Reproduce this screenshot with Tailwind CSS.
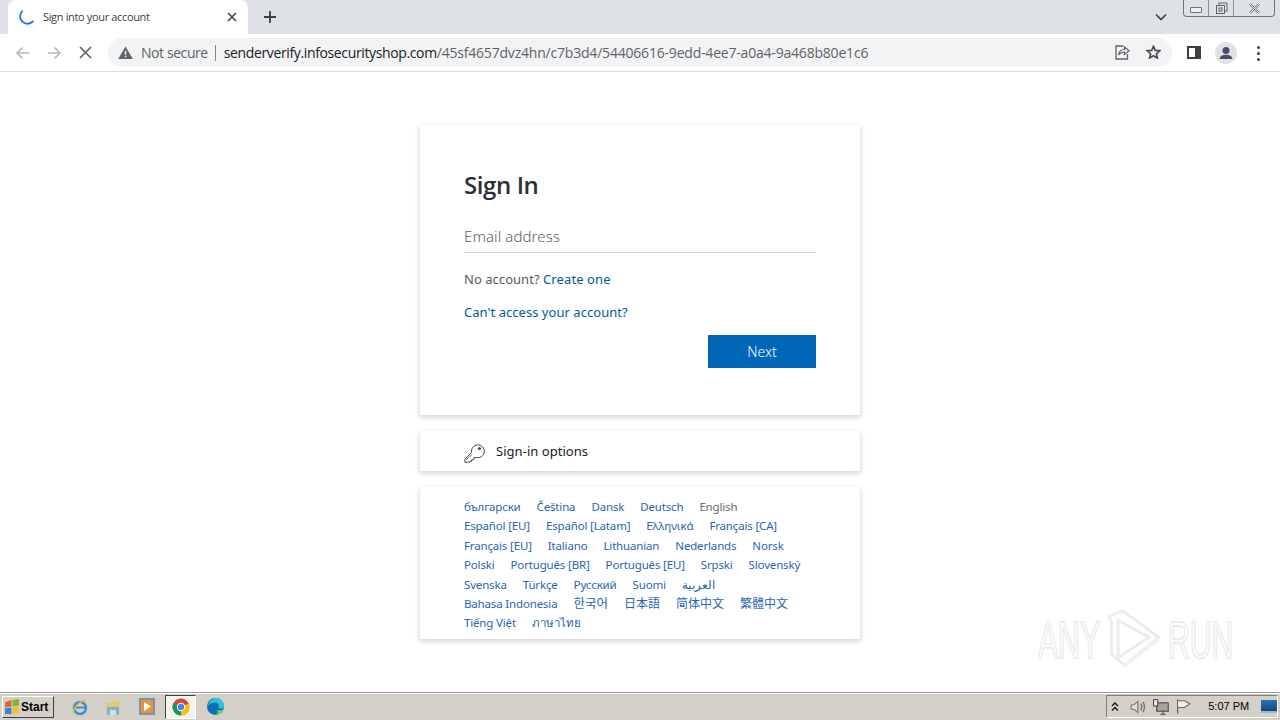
<!DOCTYPE html>
<html lang="en">
<head>
<meta charset="utf-8">
<title>Sign into your account</title>
<script src="https://cdn.jsdelivr.net/npm/@tailwindcss/browser@4"></script>
</head>
<body class="w-[1280px] h-[720px] overflow-hidden bg-white font-['Noto_Sans','Noto_Sans_CJK_KR',sans-serif] relative flex flex-col">

<!-- tab strip -->
<div class="h-[34px] bg-[#dee1e6] flex items-end relative shrink-0">
  <div class="ml-[8px] w-[240px] h-[34px] bg-white rounded-t-[8px] flex items-center pl-[11px] pr-[11px] relative">
    <svg width="16" height="16" viewBox="0 0 16 16" fill="none" class="shrink-0"><path d="M3.200 2.200 A7 7 0 0 0 13.800 12.500" stroke="#1a73e8" stroke-width="1.800" stroke-linecap="round"/></svg>
    <span class="ml-[8px] text-[11px] text-[#3c4043] whitespace-nowrap font-['Open_Sans',sans-serif] tracking-[-0.35px]">Sign into your account</span>
    <svg class="ml-auto" width="10" height="10" viewBox="0 0 10 10"><path d="M1 1L9 9M9 1L1 9" stroke="#45484c" stroke-width="1.700"/></svg>
  </div>
  <div class="ml-[16px] h-[34px] flex items-center">
    <svg width="12" height="12" viewBox="0 0 12 12"><path d="M6 0V12M0 6H12" stroke="#3c4043" stroke-width="1.800"/></svg>
  </div>
  <svg class="absolute left-[1155px] top-[13px]" width="12" height="8" viewBox="0 0 12 8" fill="none"><path d="M1 1.500L6 6.500L11 1.500" stroke="#3c4043" stroke-width="1.700"/></svg>
  <!-- window buttons -->
  <div class="absolute left-[1183px] top-0 w-[92px] h-[17px] border border-t-0 border-[#70757c] rounded-b-[4px] flex">
    <div class="w-[25px] h-full border-r border-[#8b9097] flex items-center justify-center">
      <div class="w-[12px] h-[6px] border border-[#6f747a] rounded-[1px] bg-[#eef0f3] mt-[3px]"></div>
    </div>
    <div class="w-[25px] h-full border-r border-[#8b9097] flex items-center justify-center">
      <svg width="13" height="13" viewBox="0 0 13 13" fill="none"><rect x="4" y="1" width="8" height="8" stroke="#5f6368"/><rect x="1.500" y="3.500" width="8" height="8" fill="#dee1e6" stroke="#5f6368"/><rect x="4" y="6" width="3" height="3" stroke="#5f6368"/></svg>
    </div>
    <div class="flex-1 flex items-center justify-center">
      <svg width="13" height="11" viewBox="0 0 13 11"><path d="M2 1L11 10M11 1L2 10" stroke="#70757c" stroke-width="2.400"/><path d="M2 1L11 10M11 1L2 10" stroke="#f1f2f4" stroke-width="1"/></svg>
    </div>
  </div>
</div>

<!-- toolbar -->
<div class="h-[38px] bg-white border-b border-[#dadce0] flex items-center shrink-0 relative">
  <svg class="ml-[15px]" width="15" height="14" viewBox="0 0 15 14" fill="none"><path d="M14 7H2M7.500 1.500L2 7L7.500 12.500" stroke="#b6b8bb" stroke-width="1.700"/></svg>
  <svg class="ml-[17px]" width="15" height="14" viewBox="0 0 15 14" fill="none"><path d="M1 7H13M7.500 1.500L13 7L7.500 12.500" stroke="#b6b8bb" stroke-width="1.700"/></svg>
  <svg class="ml-[17px]" width="13" height="13" viewBox="0 0 13 13"><path d="M1 1L12 12M12 1L1 12" stroke="#5f6368" stroke-width="1.700"/></svg>
  <div class="ml-[16px] w-[1064px] h-[29px] bg-[#f1f3f4] rounded-full flex items-center relative">
    <svg class="ml-[10px]" width="15" height="13" viewBox="0 0 15 13"><path d="M7.500 0.500L14.800 13H0.200Z" fill="#5f6368"/><rect x="6.800" y="4.800" width="1.500" height="4" fill="#f1f3f4"/><rect x="6.800" y="9.800" width="1.500" height="1.500" fill="#f1f3f4"/></svg>
    <span class="ml-[8px] text-[14px] text-[#5f6368] whitespace-nowrap font-['Open_Sans',sans-serif] tracking-[-0.42px]">Not secure</span>
    <div class="ml-[7px] w-px h-[16px] bg-[#80868b]"></div>
    <span class="ml-[8px] text-[14px] whitespace-nowrap text-[#5f6368] font-['Open_Sans',sans-serif] tracking-[-0.2px]"><span class="text-[#202124] tracking-[-0.37px]">senderverify.infosecurityshop.com</span>/45sf4657dvz4hn/c7b3d4/54406616-9edd-4ee7-a0a4-9a468b80e1c6</span>
    <svg class="absolute left-[1006px] top-[7px]" width="16" height="15" viewBox="0 0 16 15" fill="none"><path d="M9 1H1.500V14H13V9" stroke="#5f6368" stroke-width="1.300" transform="translate(0.500 0)"/><path d="M4.500 10C5 6.500 7.500 4.500 10.500 4.500V2L15 5.800L10.500 9.500V7C8 7 6 8 4.500 10Z" fill="#f1f3f4" stroke="#5f6368" stroke-width="1.200"/></svg>
    <svg class="absolute left-[1038px] top-[7px]" width="15" height="14" viewBox="0 0 15 14" fill="none"><path d="M7.500 1.300L9.300 5.400L13.800 5.800L10.400 8.700L11.400 13L7.500 10.700L3.600 13L4.600 8.700L1.200 5.800L5.700 5.400Z" stroke="#45484c" stroke-width="1.600"/></svg>
  </div>
  <div class="absolute left-[1187px] top-[12px] w-[14px] h-[13px] border-[2px] border-[#3c4043] border-r-[6px] bg-white"></div>
  <div class="absolute left-[1215px] top-[8px] w-[22px] h-[22px] rounded-full bg-[#e0e2e8] overflow-hidden">
    <svg width="22" height="22" viewBox="0 0 22 22"><circle cx="11" cy="8.500" r="3.500" fill="#474e66"/><path d="M4.500 17C5.500 13.500 8 12.800 11 12.800S16.500 13.500 17.500 17Z" fill="#474e66"/></svg>
  </div>
  <div class="absolute left-[1257px] top-[12px] flex flex-col gap-[3px]">
    <div class="w-[3px] h-[3px] rounded-full bg-[#3c4043]"></div>
    <div class="w-[3px] h-[3px] rounded-full bg-[#3c4043]"></div>
    <div class="w-[3px] h-[3px] rounded-full bg-[#3c4043]"></div>
  </div>
</div>

<!-- page -->
<main class="flex-1 flex flex-col items-center pt-[53px] bg-white">
  <section class="w-[440px] h-[290px] bg-white shadow-[0_2px_6px_rgba(0,0,0,0.2)] px-[44px] pt-[44px] flex flex-col">
    <h1 class="text-[24px] leading-[32px] font-semibold text-[#2b2f36] font-['Open_Sans',sans-serif] tracking-[-0.4px]">Sign In</h1>
    <div class="mt-[20px] h-[32px] border-b border-[#d5d5d8] text-[15px] leading-[30px] font-light text-[#5e5e5e] tracking-[0.1px]">Email address</div>
    <p class="mt-[16px] text-[13px] leading-[21px] text-[#5a5a5a] tracking-[0.04px]">No account? <a class="text-[#005a9e] tracking-[0.1px]">Create one</a></p>
    <p class="mt-[12px] text-[13px] leading-[21px] text-[#005a9e] tracking-[0.04px]"><a>Can't access your account?</a></p>
    <div class="mt-[12px] flex justify-end">
      <div class="w-[108px] h-[33px] bg-[#0067b8] text-white text-[14px] font-light flex items-center justify-center">Next</div>
    </div>
  </section>

  <section class="mt-[16px] w-[440px] h-[40px] bg-white shadow-[0_2px_6px_rgba(0,0,0,0.2)] pl-[44px] flex items-center">
    <svg width="21" height="20" viewBox="0 0 21 20" fill="none" class="mt-[3px]"><path d="M7.500 9.500A6.500 6.500 0 1 1 12 14.500L9.800 14.700L9.700 16.700L7.700 16.800L7.500 18.500L5 19L1 19.500L0.700 16.500Z" stroke="#4a4a4a" stroke-width="1"/><circle cx="15.500" cy="5.500" r="1.600" fill="#4a4a4a"/><path d="M2 17L8 11.500" stroke="#4a4a4a" stroke-width="0.800"/></svg>
    <span class="ml-[11px] mt-[2px] text-[13px] text-[#1b1b1b] tracking-[0.04px]">Sign-in options</span>
  </section>

  <section class="mt-[16px] w-[440px] h-[152px] bg-white shadow-[0_2px_6px_rgba(0,0,0,0.2)] pl-[44px] pt-[10px] text-[11.500px] leading-[19.400px] text-[#2a64b4] tracking-[-0.16px]">
    <div class="flex gap-[16px]"><a>български</a><a>Čeština</a><a>Dansk</a><a>Deutsch</a><a class="text-[#6a6a6a]">English</a></div>
    <div class="flex gap-[16px]"><a>Español [EU]</a><a>Español [Latam]</a><a>Ελληνικά</a><a>Français [CA]</a></div>
    <div class="flex gap-[16px]"><a>Français [EU]</a><a>Italiano</a><a>Lithuanian</a><a>Nederlands</a><a>Norsk</a></div>
    <div class="flex gap-[16px]"><a>Polski</a><a>Português [BR]</a><a>Português [EU]</a><a>Srpski</a><a>Slovenský</a></div>
    <div class="flex gap-[16px]"><a>Svenska</a><a>Türkçe</a><a>Русский</a><a>Suomi</a><a class="text-[11.500px] font-medium tracking-normal">العربية</a></div>
    <div class="flex gap-[16px]"><a>Bahasa Indonesia</a><a class="text-[12.500px] tracking-normal">한국어</a><a class="text-[12px] tracking-normal">日本語</a><a class="text-[12px] tracking-normal">简体中文</a><a class="text-[12px] tracking-normal">繁體中文</a></div>
    <div class="flex gap-[16px]"><a>Tiếng Việt</a><a class="tracking-normal">ภาษาไทย</a></div>
  </section>
</main>

<!-- watermark -->
<div class="absolute left-[1038px] top-[606px] w-[200px] h-[68px] flex items-center pointer-events-none select-none">
  <span class="text-[52px] leading-none text-transparent [-webkit-text-stroke:2px_#ececec] font-['Liberation_Sans',sans-serif] scale-x-[0.58] origin-left w-[62px] shrink-0 whitespace-nowrap">ANY</span>
  <svg class="ml-[4px] shrink-0" width="62" height="64" viewBox="0 0 66 66" fill="none"><path d="M5 8L20 2L58 30L22 60L8 48V14Z" stroke="#ececec" stroke-width="3"/><path d="M15 12V52L48 30Z" stroke="#ececec" stroke-width="3"/><path d="M22 60L58 32" stroke="#f2f2f2" stroke-width="4"/></svg>
  <span class="ml-[2px] text-[52px] leading-none text-transparent [-webkit-text-stroke:2px_#ececec] font-['Liberation_Sans',sans-serif] scale-x-[0.58] origin-left shrink-0 whitespace-nowrap">RUN</span>
</div>

<!-- taskbar -->
<footer class="h-[28px] bg-[#d4d0c8] border-t border-t-[#9b9a96] shadow-[inset_0_1px_0_#ffffff] flex items-center shrink-0 relative">
  <div class="ml-[2px] w-[52px] h-[22px] bg-[#d4d0c8] border border-t-white border-l-white border-r-[#404040] border-b-[#404040] flex items-center pl-[1px]">
    <svg width="17" height="16" viewBox="0 0 16 15"><path d="M1 3L7 1V7L1 8Z" fill="#e8622a"/><path d="M8 1L14 0V6L8 7Z" fill="#7db53a"/><path d="M1 9L7 8V14L1 14Z" fill="#3d7fd0"/><path d="M8 8L14 7V13L8 14Z" fill="#f0c030"/></svg>
    <span class="text-[12px] font-bold text-black font-['Liberation_Sans',sans-serif]">Start</span>
  </div>
  <!-- IE -->
  <svg class="ml-[17px]" width="18" height="18" viewBox="0 0 18 18" fill="none"><circle cx="9" cy="10" r="6" stroke="#3f8fd0" stroke-width="2.500"/><path d="M4 9.500H14" stroke="#3f8fd0" stroke-width="2"/><path d="M3 15C1 12 8 3 15 2" stroke="#e8b93c" stroke-width="1.500"/></svg>
  <!-- explorer -->
  <svg class="ml-[16px]" width="16" height="18" viewBox="0 0 16 18"><path d="M1 5H6L7 3H14V16H1Z" fill="#e8c66a"/><path d="M2 9H14V17H2Z" fill="#7fb1c9"/><rect x="5" y="12" width="6" height="5" fill="#cfe3ec"/></svg>
  <!-- media -->
  <div class="ml-[18px] w-[16px] h-[17px] bg-[#6f96b8] flex items-center justify-center">
    <div class="w-[12px] h-[13px] bg-[#ec9232] flex items-center justify-center">
      <svg width="7" height="9" viewBox="0 0 7 9"><path d="M0 0L7 4.500L0 9Z" fill="#ffffff"/></svg>
    </div>
  </div>
  <!-- chrome, active -->
  <div class="ml-[10px] w-[31px] h-[24px] bg-[#f4f3f0] border border-t-[#404040] border-l-[#404040] border-r-white border-b-white flex items-center justify-center">
    <svg width="18" height="18" viewBox="0 0 18 18"><circle cx="9" cy="9" r="8.500" fill="#db4437"/><path d="M9 9L16.800 5.500A8.500 8.500 0 0 1 9 17.500Z" fill="#f4c20d"/><path d="M9 9L9 17.500A8.500 8.500 0 0 1 1.500 5Z" fill="#0f9d58"/><circle cx="9" cy="9" r="4.200" fill="#ffffff"/><circle cx="9" cy="9" r="3.200" fill="#4285f4"/></svg>
  </div>
  <!-- edge -->
  <svg class="ml-[11px]" width="17" height="17" viewBox="0 0 17 17"><circle cx="8.500" cy="8.500" r="8.500" fill="#0c6fb8"/><path d="M1 8C2 2 7 0 10 0C14 0 17 3.500 17 8.500C17 11 13 11 11.500 10C13 7 11 4.500 8 4.500C5 4.500 2.500 6 1 8Z" fill="#35c1d8"/><path d="M16.500 11.500C15 15 12 17 9 17C11 16 11 13 10 12C12 12.500 15 12.500 16.500 11.500Z" fill="#6fd44a"/></svg>

  <!-- tray -->
  <div class="ml-auto mr-[2px] w-[172px] h-[23px] border border-t-[#808080] border-l-[#808080] border-r-white border-b-white flex items-center relative">
    <svg class="ml-[4px]" width="8" height="10" viewBox="0 0 8 10" fill="none"><path d="M1 4L4 1L7 4M1 8.500L4 5.500L7 8.500" stroke="#1a1a1a" stroke-width="1.400"/></svg>
    <svg class="ml-[10px]" width="18" height="18" viewBox="0 0 16 16" fill="none"><path d="M2 6H4.500L8 3V13L4.500 10H2Z" fill="#ddd" stroke="#777"/><path d="M10.500 5C11.800 7 11.800 9 10.500 11M12.500 3.500C14.500 6.500 14.500 9.500 12.500 12.500" stroke="#777" stroke-width="1.300"/></svg>
    <svg class="ml-[5px]" width="18" height="18" viewBox="0 0 17 17" fill="none"><rect x="4.500" y="4.500" width="11" height="8" fill="#a8a59d" stroke="#444"/><rect x="1.500" y="1.500" width="4" height="6" fill="#eee" stroke="#444"/><path d="M8 15.500H13M10.500 12.500V15.500" stroke="#444"/></svg>
    <svg class="ml-[6px]" width="17" height="17" viewBox="0 0 16 16" fill="none"><path d="M2.500 1V15" stroke="#666" stroke-width="1.200"/><path d="M3 2.500H9L14 5.500L9 9H3" fill="#eeeeee" stroke="#666"/></svg>
    <span class="ml-[16px] text-[11px] text-black font-['Liberation_Sans',sans-serif] whitespace-nowrap">5:07 PM</span>
    <div class="ml-[12px] w-[16px] h-[13px] bg-gradient-to-b from-[#2a72b8] to-[#17487c] border-b-2 border-[#9fb5c8]"></div>
  </div>
</footer>
</body>
</html>
